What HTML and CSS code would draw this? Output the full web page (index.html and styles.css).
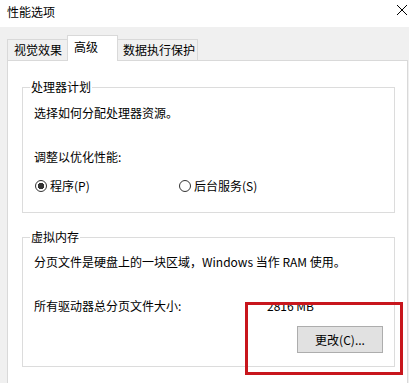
FILE: index.html
```html
<!DOCTYPE html>
<html lang="zh-CN">
<head>
    <meta charset="UTF-8">
    <title>性能选项</title>
    <link rel="stylesheet" href="styles.css">
</head>
<body>
    <div class="titlebar">
        <span class="title">性能选项</span>
        <svg class="close" width="12" height="12" viewBox="0 0 12 12">
            <path d="M1 1 L11 11 M11 1 L1 11" stroke="#000" stroke-width="1" fill="none"/>
        </svg>
    </div>

    <div class="window">
        <!-- Tabs -->
        <div class="tabs">
            <div class="tab first">视觉效果</div>
            <div class="tab active">高级</div>
            <div class="tab last">数据执行保护</div>
        </div>

        <div class="panel">
            <fieldset class="group">
                <legend>处理器计划</legend>
                <p class="line">选择如何分配处理器资源。</p>
                <p class="line spaced">调整以优化性能:</p>
                <div class="radios">
                    <label class="radio-item"><span class="radio checked"></span>程序(P)</label>
                    <label class="radio-item"><span class="radio"></span>后台服务(S)</label>
                </div>
            </fieldset>

            <fieldset class="group memory">
                <legend>虚拟内存</legend>
                <p class="line">分页文件是硬盘上的一块区域，Windows 当作 RAM 使用。</p>
                <div class="size-row">
                    <span>所有驱动器总分页文件大小:</span>
                    <span>2816 MB</span>
                </div>
                <div class="actions">
                    <button class="btn">更改(C)...</button>
                </div>
            </fieldset>
        </div>
    </div>

    <!-- annotation -->
    <div class="highlight"></div>
</body>
</html>
```

FILE: styles.css
```css
body {
    margin: 0;
    width: 409px;
    height: 383px;
    overflow: hidden;
    background-color: #f0f0f0;
    font-family: "Noto Sans CJK SC", "Noto Sans", sans-serif;
    font-size: 12px;
    line-height: 16px;
    color: #000;
    position: relative;
}
.titlebar {
    height: 27px;
    background: #fff;
    display: flex;
    justify-content: space-between;
    align-items: flex-start;
}
.title {
    padding: 4px 0 0 7px;
}
.close {
    margin: 4px 1px 0 0;
}
.window {
    padding-top: 8px;
}
.tabs {
    display: flex;
    align-items: flex-end;
    padding-left: 7px;
    position: relative;
    z-index: 1;
}
.tab {
    box-sizing: border-box;
    height: 21px;
    padding: 2px 0 0 6px;
    border: 1px solid #d9d9d9;
    border-bottom: none;
    background: #f0f0f0;
}
.tab.first {
    width: 60px;
    border-right: none;
}
.tab.last {
    width: 80px;
    border-left: none;
    padding-left: 5px;
}
.tab.active {
    width: 51px;
    height: 26px;
    padding: 3px 0 0 6px;
    margin-bottom: -1px;
    background: #fff;
}
.panel {
    margin: 0 1px 0 7px;
    height: 304px;
    background: #fff;
    border: 1px solid #d9d9d9;
    border-bottom: none;
    padding: 18px 12px 0 14px;
}
.group {
    margin: 0;
    border: 1px solid #dcdcdc;
    padding: 10px 11px 18px 11px;
    min-width: 0;
}
.group legend {
    padding: 0 1px;
    margin-left: -4px;
}
.group.memory {
    margin-top: 16px;
    padding: 9px 11px 13px 11px;
}
.line {
    margin: 0;
}
.line.spaced {
    margin-top: 28px;
}
.radios {
    display: grid;
    grid-template-columns: 144px auto;
    margin-top: 13px;
    padding-left: 1px;
}
.radio-item {
    display: flex;
    align-items: center;
    gap: 3px;
}
.radio {
    box-sizing: border-box;
    width: 12px;
    height: 12px;
    border: 1px solid #333;
    border-radius: 50%;
}
.radio.checked {
    background: radial-gradient(circle, #333 3px, transparent 3.5px);
}
.size-row {
    display: grid;
    grid-template-columns: 233px auto;
    margin-top: 28px;
}
.actions {
    display: flex;
    justify-content: flex-end;
    margin-top: 12px;
}
.btn {
    width: 86px;
    height: 27px;
    background: #e1e1e1;
    border: 1px solid #adadad;
    font-family: inherit;
    font-size: 12px;
    color: #000;
    padding: 0;
}
.highlight {
    position: absolute;
    left: 245px;
    top: 302px;
    width: 152px;
    height: 67px;
    border: 3px solid #c8161d;
}
```
